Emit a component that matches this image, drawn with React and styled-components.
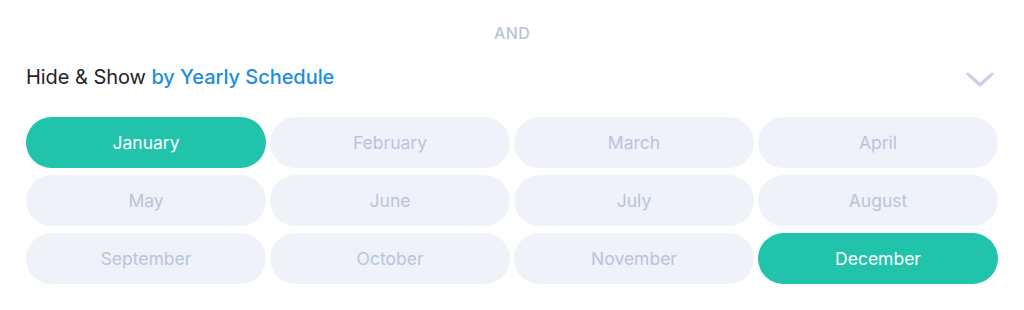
import React, { useState } from "react";
import styled, { createGlobalStyle } from "styled-components";

const GlobalStyle = createGlobalStyle`
  html, body {
    margin: 0;
    padding: 0;
    background: #ffffff;
    font-family: Inter, "Noto Sans", "Liberation Sans", sans-serif;
  }
`;

const MONTHS = [
  "January", "February", "March", "April",
  "May", "June", "July", "August",
  "September", "October", "November", "December",
];

// Styled Components
const Panel = styled.div`
  width: 1024px;
  height: 310px;
  box-sizing: border-box;
  padding: 24px 26px 0 26px;
  display: flex;
  flex-direction: column;
`;

const Divider = styled.div`
  text-align: center;
  font-size: 16px;
  font-weight: 500;
  letter-spacing: 0.4px;
  color: #b8c3da;
  line-height: 18px;
`;

const Header = styled.div`
  display: flex;
  align-items: center;
  justify-content: space-between;
  margin-top: 20px;
  height: 30px;
`;

const Title = styled.div`
  font-size: 20px;
  color: #1f2226;
  letter-spacing: -0.05px;
`;

const Accent = styled.span`
  color: #1b8fdc;
  font-weight: 500;
`;

const Toggle = styled.button`
  background: none;
  border: none;
  padding: 0;
  margin-right: 4px;
  margin-top: 6px;
  cursor: pointer;
  display: flex;
`;

const Grid = styled.div`
  display: grid;
  grid-template-columns: repeat(4, 240px);
  grid-auto-rows: 51px;
  column-gap: 4px;
  row-gap: 7px;
  margin-top: 25px;
`;

const MonthButton = styled.button`
  border: none;
  border-radius: 26px;
  font-family: inherit;
  font-size: 17.5px;
  cursor: pointer;
  background: ${({ $active }) => ($active ? "#21c4aa" : "#eff2f8")};
  color: ${({ $active }) => ($active ? "#ffffff" : "#b9c4da")};
`;

const App = () => {
  const [selected, setSelected] = useState(["January", "December"]);

  const toggle = (m) =>
    setSelected((s) => (s.includes(m) ? s.filter((x) => x !== m) : [...s, m]));

  return (
    <Panel>
      <GlobalStyle />
      <Divider>AND</Divider>
      <Header>
        <Title>
          Hide &amp; Show <Accent>by Yearly Schedule</Accent>
        </Title>
        <Toggle>
          <svg width="28" height="16" viewBox="0 0 28 16">
            <path d="M2 2 L14 13 L26 2" fill="none" stroke="#c9d1e2" strokeWidth="3.2" strokeLinecap="round" strokeLinejoin="round" />
          </svg>
        </Toggle>
      </Header>
      <Grid>
        {MONTHS.map((m) => (
          <MonthButton key={m} $active={selected.includes(m)} onClick={() => toggle(m)}>
            {m}
          </MonthButton>
        ))}
      </Grid>
    </Panel>
  );
};

export default App;
